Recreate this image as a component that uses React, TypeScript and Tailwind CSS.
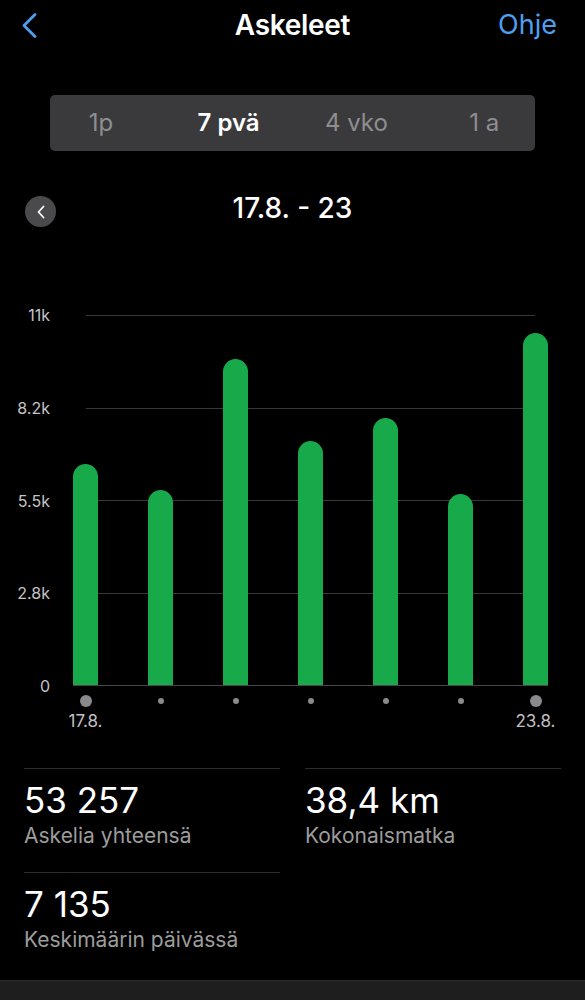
import React from "react";

const bars = [221, 195, 326, 244, 267, 191, 352];
const yLabels = ["11k", "8.2k", "5.5k", "2.8k", "0"];
const segments = ["1p", "7 pvä", "4 vko", "1 a"];

function Stat({ value, label }: { value: string; label: string }) {
  return (
    <div className="border-t border-[#2c2c2e] pt-[11px] pb-[24px]">
      <div className="text-[35px] leading-[40px] text-white">{value}</div>
      <div className="mt-[4px] text-[21px] leading-[24px] text-[#9c9c9c]">{label}</div>
    </div>
  );
}

export default function App() {
  return (
    <div
      className="flex h-[1000px] w-[585px] flex-col overflow-hidden bg-black"
      style={{ fontFamily: "Inter, 'Liberation Sans', sans-serif" }}
    >
      {/* nav bar */}
      <div className="grid h-[50px] grid-cols-[1fr_auto_1fr] items-center">
        <div className="pl-[20px]">
          <svg width="18" height="27" viewBox="0 0 18 27" fill="none">
            <path d="M15 2.5 L4 13.5 L15 24.5" stroke="#4f9ff0" strokeWidth="2.8" strokeLinecap="round" strokeLinejoin="round" />
          </svg>
        </div>
        <div className="text-[28px] font-semibold tracking-[-0.3px] text-white">Askeleet</div>
        <div className="pr-[28px] text-right text-[27px] text-[#4f9ff0]">Ohje</div>
      </div>

      {/* period switch */}
      <div className="mx-[50px] mt-[45px] h-[56px] rounded-[5px] bg-[#3a3a3c]">
        <div className="-mx-[13px] grid h-full grid-cols-4 items-center text-center text-[24px]">
          {segments.map((s, i) => (
            <div key={s} className={i === 1 ? "font-semibold text-white" : "text-[#8e8e90]"}>
              {s}
            </div>
          ))}
        </div>
      </div>

      {/* date row */}
      <div className="mt-[41px] grid h-[31px] grid-cols-[1fr_auto_1fr] items-center">
        <div className="pl-[25px]">
          <div className="flex h-[31px] w-[31px] items-center justify-center rounded-full bg-[#4a4a4c]">
            <svg width="10" height="14" viewBox="0 0 10 14" fill="none">
              <path d="M7.5 1.5 L2.5 7 L7.5 12.5" stroke="white" strokeWidth="1.8" strokeLinecap="round" strokeLinejoin="round" />
            </svg>
          </div>
        </div>
        <div className="mb-[7px] text-[28px] leading-[32px] font-medium text-white">17.8. - 23</div>
        <div />
      </div>

      {/* chart */}
      <div className="mt-[92px] flex">
        <div className="flex h-[371px] w-[50px] flex-col justify-between">
          {yLabels.map((l) => (
            <div key={l} className="flex h-0 items-center justify-end text-[16px] text-[#c4c4c6]">
              {l}
            </div>
          ))}
        </div>
        <div className="ml-[23px] w-[475px]">
          <div className="relative h-[371px] border-b border-[#48484a]">
            {[0, 25, 50, 75].map((t) => (
              <div
                key={t}
                className="absolute left-[13px] right-[13px] h-px bg-[#38383a]"
                style={{ top: `${t}%` }}
              />
            ))}
            <div className="relative flex h-full items-end justify-between">
              {bars.map((h, i) => (
                <div key={i} className="w-[25px] rounded-t-full bg-[#17a94a]" style={{ height: h }} />
              ))}
            </div>
          </div>
          <div className="mt-[9px] flex h-[12px] items-center justify-between">
            {bars.map((_, i) => (
              <div key={i} className="flex w-[25px] justify-center">
                <div
                  className={
                    i === 0 || i === 6
                      ? "h-[12px] w-[12px] rounded-full bg-[#8a8a8c]"
                      : "h-[6px] w-[6px] rounded-full bg-[#8a8a8c]"
                  }
                />
              </div>
            ))}
          </div>
          <div className="mt-[4px] flex justify-between text-[17px] leading-[20px] text-[#c0c0c2]">
            <div className="flex w-[25px] justify-center whitespace-nowrap">17.8.</div>
            <div className="flex w-[25px] justify-center whitespace-nowrap">23.8.</div>
          </div>
        </div>
      </div>

      {/* stats */}
      <div className="mt-[37px] grid grid-cols-2 gap-x-[25px] px-[24px]">
        <Stat value="53 257" label="Askelia yhteensä" />
        <Stat value="38,4 km" label="Kokonaismatka" />
        <Stat value="7 135" label="Keskimäärin päivässä" />
      </div>

      <div className="mt-auto h-[20px] border-t border-[#2a2a2a] bg-[#1e1e1e]" />
    </div>
  );
}
